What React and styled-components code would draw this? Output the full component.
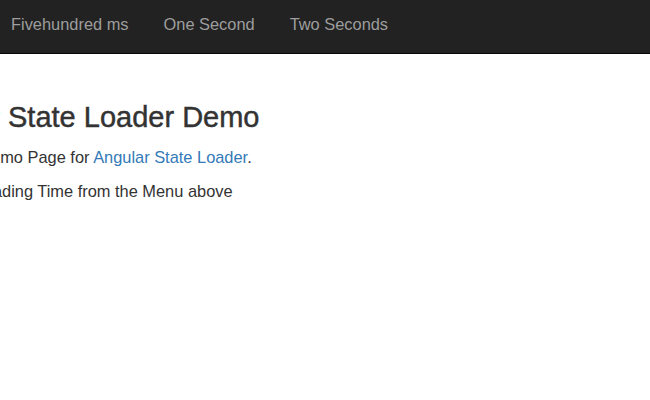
import styled, { createGlobalStyle } from "styled-components"

const GlobalStyle = createGlobalStyle`
  html, body {
    margin: 0;
    padding: 0;
    background: #fff;
    overflow: hidden;
  }
  body {
    font-family: "Liberation Sans", Arial, Helvetica, sans-serif;
    font-size: 16.4px;
    color: #333;
  }
`

const Navbar = styled.nav`
  height: 53px;
  background-color: #222;
  border-bottom: 1px solid #080808;
  display: flex;
  align-items: center;
  padding-left: 11px;
`

const NavLink = styled.a`
  color: #9d9d9d;
  font-size: 16.4px;
  text-decoration: none;
  margin-right: 35px;
  line-height: 1;
  margin-top: -5px;
  cursor: pointer;
  &:hover {
    color: #fff;
  }
`

const Main = styled.main`
  margin-left: -100px;
  padding-top: 48px;
`

const Title = styled.h1`
  font-size: 29px;
  font-weight: 500;
  line-height: 1.1;
  margin: 0 0 12px;
  color: #333;
  -webkit-text-stroke: 0.45px #333;
`

const Text = styled.p`
  margin: 0 0 10.5px;
  line-height: 23.5px;
`

const Link = styled.a`
  color: #337ab7;
  text-decoration: none;
`

const App = () => {
  return (
    <>
      <GlobalStyle />
      <Navbar>
        <NavLink>Fivehundred ms</NavLink>
        <NavLink>One Second</NavLink>
        <NavLink>Two Seconds</NavLink>
      </Navbar>
      <Main>
        <Title>Angular State Loader Demo</Title>
        <Text>This is the Demo Page for <Link href="#">Angular State Loader</Link>.</Text>
        <Text>Choose a Loading Time from the Menu above</Text>
      </Main>
    </>
  )
}

export default App
